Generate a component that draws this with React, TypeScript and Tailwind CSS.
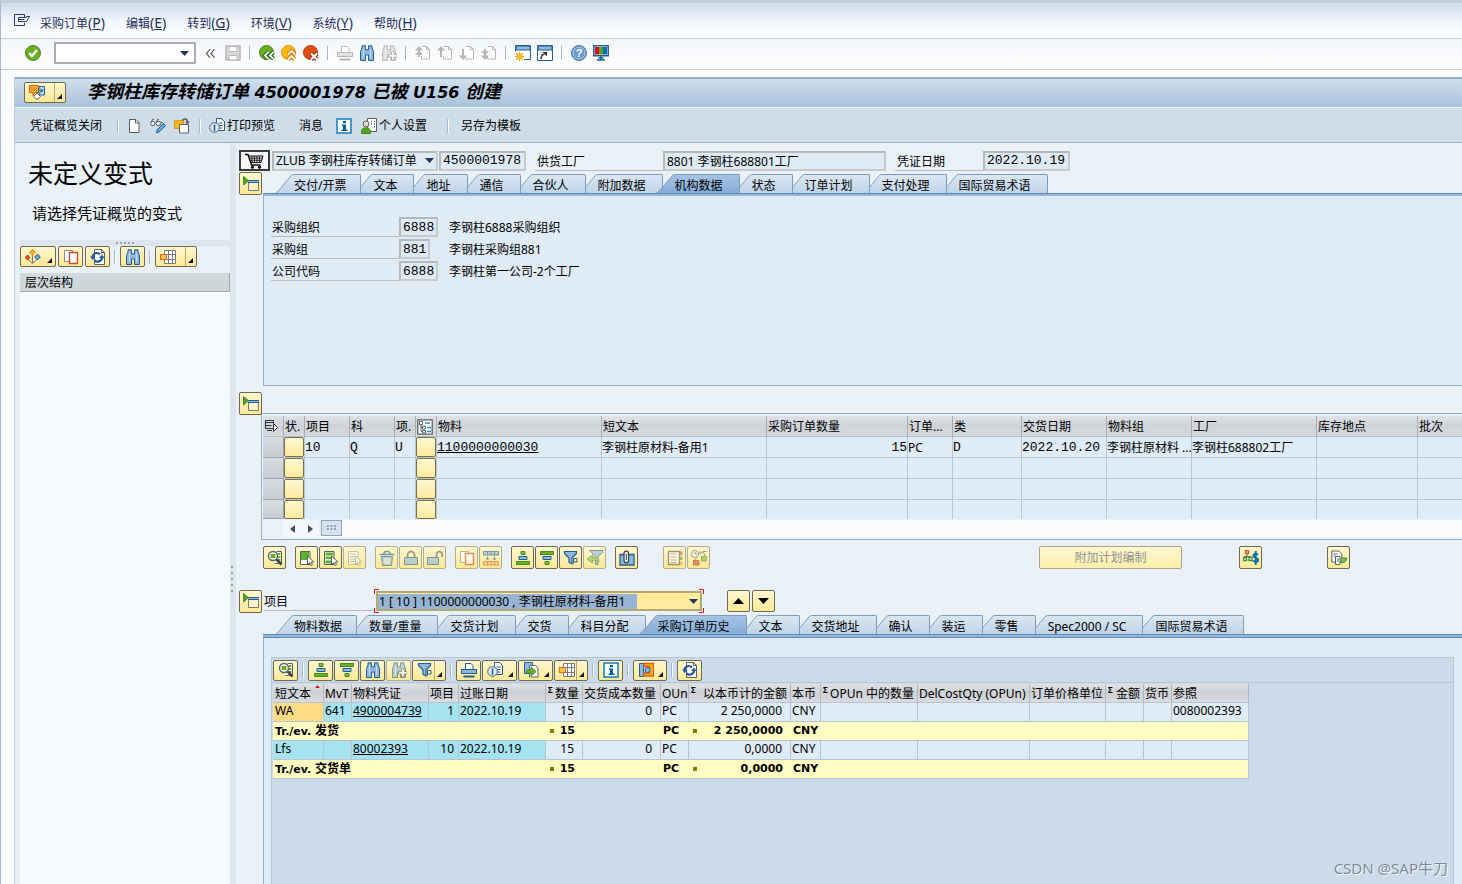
import React from "react";
import clsx from "clsx";

const G = "#3f8f2f";
const B = "#1f5f95";
const LB = "#8fb8dc";
const GR = "#5a5f66";
const MUTE = "#9a9ea2";

const page = (
  <path d="M3.5 1.5h6.5l3 3v10h-9.5z" fill="#fff" stroke={GR} />
);

const binoculars = (s: string, f: string) => (
  <g fill={f} stroke={s}>
    <path d="M1.500 6.500 3 3V.8h3.500v4h3v-4H13V3l1.500 3.500v9H9.500V10h-3v5.500h-5z" />
    <path d="M4.500 3.500v9M11.500 3.500v9" stroke="#fff" strokeOpacity=".5" />
  </g>
);

const printer = (s: string, f: string) => (
  <g stroke={s} fill="#fff">
    <path d="M4.500 7V1.500h5.500l2 2V7" />
    <rect x=".5" y="7.500" width="15" height="4" fill={f} />
    <path d="M2.500 14.500h11" strokeWidth="2" />
  </g>
);

const cursorArrow = (s: string) => (
  <path d="M8.500 6v8.500l2-2 1.500 3 1.500-.8-1.400-2.700h2.800z" fill="#fff" stroke={s} />
);

const docList = (s: string, g: string, mode: number) => (
  <g>
    <path d="M1.500 1.500h9.500v13h-9.500z" fill="#fff" stroke={s} />
    {mode === 0 && <path d="M2 2h8.500v8H2z" fill={g} />}
    {mode === 1 && <path d="M2.500 2.500h8v3h-8zM2.500 6.500h6V9h-6zM2.500 10.500h5.500v3H2.500z" fill={g} />}
    {mode === 2 && <path d="M3 4h6M3 6.500h6M3 9h5M3 11.500h5" stroke={s} />}
    {cursorArrow(s)}
  </g>
);

const arrowPage = (up: boolean, down: boolean) => (
  <g stroke="#b6b6b6" fill="none">
    <path d="M6.500 1.500h5l3 3v9.500h-8v-3M11.500 1.500v3h3" fill="#fff" />
    <path d="M4 4v8" strokeWidth="2" />
    {up && <path d="M0 5.500 4 1l4 4.500z" fill="#b6b6b6" stroke="none" />}
    {down && <path d="M0 10.500 4 15l4-4.500z" fill="#b6b6b6" stroke="none" />}
  </g>
);

const magnify = (
  <g>
    <path d="M9.500 1.500h5v12h-7" fill="#fff" stroke={GR} />
    <path d="M11 3h2.500v2H11zM11 6h2.500v2H11zM11 9h2.500v2H11z" fill="#6ab023" />
    <circle cx="6" cy="6" r="4.500" fill="#fff" stroke={GR} strokeWidth="1.400" />
    <path d="M3.500 4h5v4h-5z" fill="#6ab023" />
    <path d="M9.500 9.500 14.500 14.500" stroke="#444" strokeWidth="2.600" />
  </g>
);

const funnel = (
  <path d="M1.500 1.500h12v2l-4.500 4.500v6l-3-1.500V8L1.500 3.500z" fill={LB} stroke={B} strokeWidth="1.200" />
);

const clockDoc = (
  <g>
    <path d="M7.500.5h5l3 3v9h-8z" fill="#fff" stroke={B} />
    <path d="M9.500 5h4M9.500 7.500h4M9.500 10h4" stroke={B} />
    <circle cx="5.500" cy="9.500" r="4.800" fill="#dcebf7" stroke={GR} />
    <path d="M5.500 6.500v6.500" stroke={B} strokeWidth="1.500" />
  </g>
);

const refresh = (
  <g>
    <path d="M4.500.5h7l3 3v12h-10z" fill="#fff" stroke={GR} />
    <path d="M11.500.5v3h3" fill="none" stroke={GR} />
    <path d="M2.500 8a4.300 4.300 0 0 1 7.500-2.500" fill="none" stroke="#2457a6" strokeWidth="2.200" />
    <path d="M12 8.500a4.300 4.300 0 0 1-7.500 2.700" fill="none" stroke="#2457a6" strokeWidth="2.200" />
    <path d="M0 7.500h5.400L2.700 11zM9 9h5.600L12 5.500z" fill="#2457a6" />
  </g>
);

const grid = (
  <g>
    <path d="M4.500 1.500h11v13h-11zM4.500 5.500h11M4.500 10.500h11M8.500 1.500v13M12.500 1.500v13" fill="#fff" stroke="#77797c" />
    <rect x=".5" y="5.500" width="6" height="5" fill="#ffc74a" stroke="#e0691d" />
  </g>
);

const ICONS: Record<string, React.ReactNode> = {
  menu: (
    <g fill="none" stroke="#2b3768">
      <path d="M10.500 4V1.500h-10v11h10V10" />
      <path d="M4.500 4.500h8V3.500H15.500L12.500 8.500H4.500z" fill="#fff" />
      <path d="M4.500 6.500h6" />
    </g>
  ),
  check: (
    <g>
      <circle cx="8" cy="8" r="7.500" fill="#6ab023" stroke="#4e8330" />
      <path d="M4 8.200 7 11l5-6" fill="none" stroke="#fff" strokeWidth="2.400" />
    </g>
  ),
  save: (
    <g stroke="#b6b6b6" fill="#d9d9d9">
      <path d="M1 1h14v14H1z" strokeWidth="1.500" />
      <path d="M4 1.500h8v5H4zM4 10.500h8v4.500H4z" fill="#fff" />
    </g>
  ),
  back: (
    <g>
      <circle cx="7.500" cy="7.500" r="7" fill="#6ab023" stroke="#3f7f2a" />
      <path d="M9.500 7 6 10.500l3.500 3.500M14.500 7 11 10.500l3.500 3.500" fill="none" stroke="#2f7420" strokeWidth="4" />
      <path d="M9.500 7 6 10.500l3.500 3.500M14.500 7 11 10.500l3.500 3.500" fill="none" stroke="#fff" strokeWidth="1.700" />
    </g>
  ),
  exit: (
    <g>
      <circle cx="7.500" cy="7.500" r="7" fill="#fbb813" stroke="#de8a10" />
      <path d="M7 9.500 10.500 6 14 9.500M7 14.500l3.500-3.500 3.500 3.500" fill="none" stroke="#d9800d" strokeWidth="4" />
      <path d="M7 9.500 10.500 6 14 9.500M7 14.500l3.500-3.500 3.500 3.500" fill="none" stroke="#fff" strokeWidth="1.700" />
    </g>
  ),
  cancel: (
    <g>
      <circle cx="7.500" cy="7.500" r="7" fill="#dd4f12" stroke="#b23b0d" />
      <path d="m8 8.500 6 6M14 8.500l-6 6" stroke="#a33309" strokeWidth="4.500" />
      <path d="m8 8.500 6 6M14 8.500l-6 6" stroke="#fff" strokeWidth="2" />
    </g>
  ),
  printGray: printer("#b6b6b6", "#e2e2e2"),
  print: printer(B, LB),
  find: binoculars(B, LB),
  findNextGray: (
    <g>
      {binoculars("#bdbdbd", "#dedede")}
      <path d="M10.500 6.500v3h-3v2.500h3v3h2.500v-3h3V9.500h-3v-3z" fill="#fff" stroke="#b3b3b3" />
    </g>
  ),
  findNext: (
    <g>
      {binoculars(B, LB)}
      <path d="M10.500 6.500v3h-3v2.500h3v3h2.500v-3h3V9.500h-3v-3z" fill="#fff" stroke={GR} />
    </g>
  ),
  pgFirst: (
    <g>
      {arrowPage(true, false)}
      <path d="M0 10 4 5.500 8 10z" fill="#b6b6b6" />
    </g>
  ),
  pgUp: arrowPage(true, false),
  pgDown: arrowPage(false, true),
  pgLast: (
    <g>
      {arrowPage(false, true)}
      <path d="M0 6 4 10.500 8 6z" fill="#b6b6b6" />
    </g>
  ),
  newWin: (
    <g>
      <path d="M.5.500h15v14H.5z" fill="#fff" stroke={B} />
      <path d="M1 1h14v4H1z" fill={LB} stroke={B} />
      <path d="M0 6.500h9V16H0z" fill="#fff" />
      <path d="M4.500 7v9M0 11.500h9M1.300 8.300l6.400 6.400M7.700 8.300l-6.400 6.400" stroke="#f29a12" strokeWidth="1.300" />
      <circle cx="4.500" cy="11.500" r="2.600" fill="#fbc01e" />
    </g>
  ),
  shortcut: (
    <g>
      <path d="M.5.500h15v15H.5z" fill="#fff" stroke={B} />
      <path d="M1 1h14v4H1z" fill={LB} stroke={B} />
      <path d="M4 14c0-3 1-4.500 3.500-5" fill="none" stroke="#333" strokeWidth="1.500" />
      <path d="M5.500 7H10v4.500z" fill="#333" />
    </g>
  ),
  help: (
    <g>
      <circle cx="8" cy="8" r="7.500" fill="#6b9ccb" stroke="#4577a6" />
      <circle cx="8" cy="8" r="6" fill="none" stroke="#a9c9e6" />
      <text x="8" y="12" textAnchor="middle" fontSize="11" fontWeight="bold" fill="#fff" fontFamily="Liberation Sans, sans-serif">
        ?
      </text>
    </g>
  ),
  monitor: (
    <g>
      <path d="M.8.800h14.400v10H.8z" fill="#fff" stroke={B} strokeWidth="1.500" />
      <path d="M2 2h4v7.500H2z" fill="#e2001a" />
      <path d="M6 2h4v7.500H6z" fill="#5aa21c" />
      <path d="M10 2h4v7.500h-4z" fill="#0a6fb8" />
      <path d="M8 11v3.500M4 15h8M5.500 13h5" stroke={B} strokeWidth="1.500" />
    </g>
  ),
  flow: (
    <g>
      <path d="M.5.5h9v7H6l-2 3v-3H.5z" fill="#ffb52e" stroke="#d65a12" />
      <path d="M2 3h6M2 5h6" stroke="#d65a12" strokeDasharray="1.500 1" />
      <path d="M10 1.500h5.500v8.500H10z" fill="#b9dcf2" stroke={B} />
      <path d="M11.500 3.500v4.500l3-2.200z" fill={B} />
      <path d="M4.500 11.500 8 8l3.500 3.500L8 14.500z" fill="#fff" stroke={GR} />
    </g>
  ),
  page: (
    <g>
      {page}
      <path d="M9.500 1.500v3.500h3.500" fill="none" stroke={GR} />
    </g>
  ),
  glasses: (
    <g>
      <g fill="#e7edf1" stroke={GR}>
        <circle cx="2.800" cy="5.500" r="2.200" />
        <circle cx="8.300" cy="5.500" r="2.200" />
        <path d="M1 4.500 2.500 1.500h1.500M6.500 4l1-2.500H9M10.500 4.500h2" fill="none" />
      </g>
      <path d="m6.500 14.800.8-3.300 6-6 2.200 2.200-6 6z" fill="#5fa6dc" stroke={B} />
    </g>
  ),
  copyDoc: (
    <g>
      <path d="M.5 2.500h9v8h-9z" fill="#fbb41f" stroke="#e79a12" />
      <path d="M5.500 6.500h9v8.500h-9z" fill="#fff" stroke={GR} />
      <path d="M8.500 2.500c1.500-2.500 5-2 5 1.500" fill="none" stroke={GR} strokeWidth="1.500" />
      <path d="M11 3.500h5L13.500 6.500z" fill={GR} />
    </g>
  ),
  clockDoc,
  info: (
    <g>
      <path d="M1 1h14v14H1z" fill="#fff" stroke="#0b7fc2" strokeWidth="1.500" />
      <path d="M7 3h3v2.200H7zM6 6.500h4v5h1.500v1.500h-6v-1.500h1.500V8H6z" fill="#0b5f9d" />
    </g>
  ),
  person: (
    <g>
      <path d="M6.500.5h9v13h-9z" fill="#fff" stroke={GR} />
      <path d="M10 3.500h1M13 3.500h1M10 6h1M13 6h1M13 9h1" stroke={GR} strokeWidth="1.500" />
      <circle cx="5" cy="6" r="3" fill="#e8d3bb" stroke={GR} />
      <path d="M.5 15.500v-3l2-2.500h5l2 2.500v3z" fill="#5aa21c" stroke={G} />
    </g>
  ),
  cart: (
    <g fill="none" stroke="#111">
      <path d="M0 1.500h3l3.500 10.500h9" strokeWidth="1.500" />
      <path d="M4 3h14l-2 6.500H6" />
      <path d="M4.500 5.200h13M5.200 7.300h11.500M7 3v6.500M9.500 3v6.500M12 3v6.500M14.500 3v6.500" strokeWidth=".9" />
      <circle cx="7.500" cy="14.200" r="1.200" fill="#111" />
      <circle cx="14.500" cy="14.200" r="1.200" fill="#111" />
    </g>
  ),
  open: (
    <g>
      <path d="M5.500 4.500h10v10h-10z" fill="#fdf3c4" stroke="#77797c" />
      <path d="M5 4h11v2.500H5z" fill={LB} />
      <path d="M5 4.500h11M5 6.500h11" stroke={B} />
      <path d="M.5.500v8.500L5.500 4.700z" fill="#5aa21c" stroke={G} />
    </g>
  ),
  diamonds: (
    <g>
      <path d="M7.500 4v10M2.500 10l5 4.500 5-4.500" stroke="#777" fill="none" />
      <path d="m7.500.300 3 3-3 3-3-3z" fill="#fbb41f" stroke="#ee8b12" />
      <path d="m2.500 6 2.300 2.500L2.500 11 .2 8.500z" fill="#e0482a" stroke="#a8341b" />
      <path d="m12.500 5 2.800 3-2.800 3-2.800-3z" fill="#69a5d6" stroke={B} />
    </g>
  ),
  copy: (
    <g fill="#fff">
      <path d="M1.500 1.500h8v11h-8z" stroke="#8a8a8a" />
      <path d="M6.500 3.500h8v11h-8z" stroke="#d2452f" strokeWidth="1.300" />
    </g>
  ),
  refresh,
  grid,
  rowsel: (
    <g fill="none" stroke="#333">
      <path d="M1.500 1.500h8v8h-8zM1.500 3.500h8M1.500 6.500h6M3 11.500h5" />
      <path d="M9.500 4.500v8l4-4z" fill="#fff" />
    </g>
  ),
  tree: (
    <g>
      <path d="M.8.800h14.400v14.400H.8z" fill="#fff" stroke={GR} strokeWidth="1.300" />
      <path d="M4 4v8.500h3M4 8.500h3" fill="none" stroke={GR} />
      <path d="M2.500 2.500h3v3h-3zM5.500 7h3v3h-3zM5.500 11.500h3v2.500h-3z" fill="#fff" stroke={GR} />
      <path d="M8 4h5M10 8.500h4M10 12.500h4" stroke="#2d8fce" strokeWidth="1.500" />
    </g>
  ),
  magnify,
  sel0: docList(GR, "#5cb02a", 0),
  sel1: docList(GR, "#5cb02a", 1),
  sel2: docList(MUTE, MUTE, 2),
  trash: (
    <g fill={LB} stroke={B}>
      <path d="M.5 4.500h15M4.500 4l1.500-2.500h4L11.500 4" fill="none" strokeWidth="1.500" />
      <path d="M2.500 6.500h11l-1 9h-9z" />
      <path d="M6 8v6M8 8v6M10 8v6" stroke="#fff" />
    </g>
  ),
  lock: (
    <g>
      <path d="M4.500 8V5a3.500 3.500 0 0 1 7 0v3" fill="none" stroke={GR} strokeWidth="1.800" />
      <path d="M1.500 7.500h13v7h-13z" fill={LB} stroke={B} />
    </g>
  ),
  unlock: (
    <g>
      <path d="M9.500 8V4.500a2.800 2.800 0 0 1 5.600 0V7" fill="none" stroke={GR} strokeWidth="1.800" />
      <path d="M.5 7.500h11v7H.5z" fill={LB} stroke={B} />
    </g>
  ),
  insertRows: (
    <g>
      <path d="M.5 1.500h15v3.500H.5zM4.500 1.500V5M8 1.500V5M11.500 1.500V5" fill={LB} stroke={B} />
      <path d="M4.500 6.500v3M11.500 6.500v3M2.800 8.300l1.700 1.700 1.700-1.700M9.800 8.300l1.700 1.700 1.700-1.700" fill="none" stroke={B} />
      <path d="M.5 11.500h15V15H.5zM4.500 11.500V15M8 11.500V15M11.500 11.500V15" fill="#f6c193" stroke="#d2672f" />
    </g>
  ),
  asc: (
    <g>
      <path d="M6 1.500h4v3H6z" fill="#79bb3c" stroke={G} />
      <path d="M4 6.500h8v3H4z" fill={LB} stroke={B} />
      <path d="M1.500 11.500h13v3h-13z" fill="#6ab023" stroke={G} />
    </g>
  ),
  desc: (
    <g>
      <path d="M1.500 1.500h13v3h-13z" fill="#6ab023" stroke={G} />
      <path d="M4 6.500h8v3H4z" fill={LB} stroke={B} />
      <path d="M6 11.500h4v3H6z" fill="#79bb3c" stroke={G} />
    </g>
  ),
  filter: (
    <g>
      {funnel}
      <path d="M10.500 13.500v-5h3.500v3.500h-3" fill="none" stroke={B} />
    </g>
  ),
  unfilter: (
    <g>
      <path d="M2.500.5h13v2L11 6.500v8H8.500v-8l-4-4z" fill={LB} stroke={B} />
      <path d="M12 12c0-3.500-3-5-6.500-4.500V5L0 9l5.500 4v-2.500c2.500-.3 4.500 0 6.500 1.500z" fill="#7fc04a" stroke={G} />
    </g>
  ),
  attach: (
    <g>
      <path d="M1 4.500h14v10.500H1z" fill={LB} stroke={B} strokeWidth="1.300" />
      <path d="M5 10.500V3.500a2.300 2.300 0 0 1 4.600 0v7a2.300 2.300 0 0 1-4.600 0z" fill="#dbe8f4" stroke="#444" strokeWidth="1.200" />
      <path d="M7.300 4v6" stroke="#444" />
    </g>
  ),
  notebook: (
    <g>
      <path d="M1.500 1.500h11v13h-11z" fill="#fff" stroke="#555" strokeWidth="1.300" />
      <path d="M3.500 4h6M3.500 7h6M3.500 10h6M3.500 12.500h6" stroke="#888" />
      <path d="M13 1.500h2.500v3.500H13z" fill="#d9482f" />
      <path d="M13 6.500h2.500V10H13z" fill="#5aa21c" />
      <path d="M13 11.500h2.500v3H13z" fill="#f08a4b" />
    </g>
  ),
  clocks: (
    <g>
      <circle cx="4" cy="4" r="3.500" fill="#fff" stroke={GR} />
      <path d="M4 2v2h2M9 4V1M9 4l3-2.500h3.500M12 2l3 5M5.500 8 3 11" fill="none" stroke={GR} />
      <path d="M2.500 10.500h5.500v4.500H2.500z" fill="#d9523a" stroke="#a33a1b" />
      <path d="M10.500 6.500h5v4.500h-5z" fill="#7fc04a" stroke={G} />
    </g>
  ),
  cost: (
    <g>
      <path d="M4 4v2.500M1.500 9V6.500h6V9" fill="none" stroke={GR} />
      <path d="M2.500.500h3v3h-3z" fill="#ffd08a" stroke="#e0591d" strokeWidth="1.400" />
      <path d="M.5 7.500h3v3h-3zM6 7.500h3v3H6z" fill="#fff" stroke={G} strokeWidth="1.300" />
      <path d="M15 5c-.6-1.500-4.600-1.500-4.600.8 0 2.400 4.800 1.500 4.800 4.200 0 2.300-4.400 2.300-5.200.3M12.700 1v14" fill="none" stroke="#0a6fa8" strokeWidth="2" />
    </g>
  ),
  docs: (
    <g fill="#fff" stroke={GR}>
      <path d="M.8 1h7l3 3v8h-10z" />
      <path d="M2.500 4h4M2.500 6h2" />
      <path d="M4.500 6.500h4.500v8H4.500zM6 9h2M6 11h2" />
      <path d="M10 8h5.500c0 3-1.500 4.500-3.500 4.500H10z" fill="#7fc04a" stroke={G} />
    </g>
  ),
  exportDoc: (
    <g>
      <path d="M1.500.5h8v11h-8z" fill={LB} stroke={B} />
      <path d="M6.500 3.500h6l2.500 2.500v9H6.500z" fill="#fff" stroke={GR} />
      <path d="M3.500 8h4.500V5l5 4.500L8 14v-3H3.500z" fill="#6ab023" stroke={G} />
    </g>
  ),
  abc: (
    <g>
      <path d="M1.500 1.500h4v13h-4z" fill={LB} stroke={B} />
      <path d="M6 1.500h9.500v12.500H6v-3h5.500v-6.500H6z" fill="#fbb41f" stroke="#e0591d" strokeWidth="1.300" />
      <circle cx="9.500" cy="8" r="2.600" fill={LB} stroke={B} />
    </g>
  ),
};

function Icon({ name, className }: { name: string; className?: string }) {
  return (
    <svg viewBox="0 0 16 16" className={clsx("size-4 shrink-0", className)} aria-hidden="true">
      {ICONS[name]}
    </svg>
  );
}

function YellowButton({
  icon,
  label,
  disabled,
  menu,
  split,
  className,
  size = "sq",
}: {
  icon: string;
  label: string;
  disabled?: boolean;
  menu?: boolean;
  split?: boolean;
  className?: string;
  size?: "sq" | "flat";
}) {
  return (
    <button
      type="button"
      aria-label={label}
      disabled={disabled}
      className={clsx(
        "relative flex shrink-0 items-center rounded-[2px] border bg-linear-to-b from-[#fff7cf] to-[#fde995]",
        size === "sq" ? "h-[23px]" : "h-[21px]",
        menu ? "justify-start pl-1" : size === "sq" ? "w-[23px] justify-center" : "w-[25px] justify-center",
        menu && !className && "w-[34px]",
        disabled ? "border-[#b5ad85]" : "border-[#6f6a4c]",
        className,
      )}
    >
      <Icon name={icon} className={clsx(disabled && "opacity-60")} />
      {split && <span className="absolute inset-y-0 right-[10px] w-px bg-[#b9a96b]" />}
      {menu && (
        <svg viewBox="0 0 5 5" className="absolute right-[3px] bottom-[3px] size-[5px]" aria-hidden="true">
          <path d="M5 0v5H0z" fill="#111" />
        </svg>
      )}
    </button>
  );
}

function PlainIcon({ icon, label, disabled }: { icon: string; label: string; disabled?: boolean }) {
  return (
    <button type="button" aria-label={label} disabled={disabled} className="shrink-0">
      <Icon name={icon} />
    </button>
  );
}

function Sep({ className }: { className?: string }) {
  return <span className={clsx("h-[14px] w-[2px] shrink-0 border-l border-[#9db9d4] bg-white", className)} />;
}

const MENUS = [
  ["采购订单", "P"],
  ["编辑", "E"],
  ["转到", "G"],
  ["环境", "V"],
  ["系统", "Y"],
  ["帮助", "H"],
];

function DownArrow({ className }: { className?: string }) {
  return (
    <svg viewBox="0 0 9 5" className={clsx("pointer-events-none h-[5px] w-[9px]", className)} aria-hidden="true">
      <path d="M0 0h9L4.500 5z" fill="#22356b" />
    </svg>
  );
}

function MenuBar() {
  return (
    <nav className="flex h-9 items-center border-b border-[#c5ccd6] bg-linear-to-b from-[#cfdceb] via-[#f4f8fc] via-60% to-white pt-[6px] pl-[13px]">
      <Icon name="menu" className="mr-[10px] mb-[6px]" />
      <div className="flex gap-[21px]">
        {MENUS.map(([t, k]) => (
          <button key={k} type="button" className="text-[#1f2f5c]">
            {t}
            <span className="text-sm leading-4">
              (<u>{k}</u>)
            </span>
          </button>
        ))}
      </div>
    </nav>
  );
}

function StandardToolbar() {
  return (
    <div className="flex h-[31px] items-center gap-[6px] border-b border-[#c5ccd6] bg-linear-to-b from-[#f3f6fa] to-white pb-[2px] pl-[24px]">
      <PlainIcon icon="check" label="回车" />
      <div className="relative ml-[7px] flex h-[22px] w-[142px] items-center">
        <input
          aria-label="命令字段"
          className="h-full w-full rounded-[1px] border-2 border-[#a9adb2] bg-white px-1 text-xs outline-none"
        />
        <DownArrow className="absolute right-[7px]" />
      </div>
      <button type="button" aria-label="折叠" className="mx-[3px] shrink-0">
        <svg viewBox="0 0 11 10" className="h-[9px] w-[11px]" aria-hidden="true">
          <path d="M5 .5 1 5l4 4.500M10 .5 6 5l4 4.500" fill="none" stroke="#444" strokeWidth="1.200" />
        </svg>
      </button>
      <PlainIcon icon="save" label="保存" disabled />
      <Sep className="mx-[2px]" />
      <PlainIcon icon="back" label="返回" />
      <PlainIcon icon="exit" label="退出" />
      <PlainIcon icon="cancel" label="取消" />
      <Sep className="mx-[2px]" />
      <PlainIcon icon="printGray" label="打印" disabled />
      <PlainIcon icon="find" label="查找" />
      <PlainIcon icon="findNextGray" label="查找下一个" disabled />
      <Sep className="mx-[2px]" />
      <PlainIcon icon="pgFirst" label="第一页" disabled />
      <PlainIcon icon="pgUp" label="上一页" disabled />
      <PlainIcon icon="pgDown" label="下一页" disabled />
      <PlainIcon icon="pgLast" label="最后一页" disabled />
      <Sep className="mx-[2px]" />
      <PlainIcon icon="newWin" label="新建会话" />
      <PlainIcon icon="shortcut" label="快捷方式" />
      <Sep className="mx-[2px]" />
      <PlainIcon icon="help" label="帮助" />
      <PlainIcon icon="monitor" label="定制本地布局" />
    </div>
  );
}

function TitleBar() {
  return (
    <header className="flex h-[31px] items-center border-t-2 border-b border-t-[#94adc7] border-b-[#e8f0f6] bg-linear-to-b from-[#cfdfec] to-[#a9c1da] pb-px pl-[9px]">
      <YellowButton icon="flow" label="服务" menu split size="flat" className="w-[42px]" />
      <h1 className="ml-[21px] font-['DejaVu_Sans','Noto_Sans_CJK_SC',sans-serif] text-base leading-5 font-bold whitespace-pre text-black italic">
        <span className="text-lg leading-5">李钢柱库存转储订单</span> 4500001978 <span className="text-lg leading-5">已被</span> U156{" "}
        <span className="text-lg leading-5">创建</span>
      </h1>
    </header>
  );
}

function AppToolbar() {
  return (
    <div className="flex h-[35px] items-center border-b border-[#9db4ca] bg-[#cfdde8] pt-[2px] pl-[15px]">
      <button type="button">凭证概览关闭</button>
      <Sep className="mr-[7px] ml-[15px]" />
      <div className="flex gap-[8px]">
        <PlainIcon icon="page" label="创建" />
        <PlainIcon icon="glasses" label="显示/更改" />
        <PlainIcon icon="copyDoc" label="其他凭证" />
      </div>
      <Sep className="mr-[8px] ml-[9px]" />
      <button type="button" className="flex items-center gap-[2px]">
        <Icon name="clockDoc" />
        打印预览
      </button>
      <button type="button" className="ml-[24px]">
        消息
      </button>
      <div className="mr-[9px] ml-[13px] flex">
        <PlainIcon icon="info" label="帮助信息" />
      </div>
      <button type="button" className="flex items-center gap-[2px]">
        <Icon name="person" />
        个人设置
      </button>
      <Sep className="mr-[12px] ml-[20px]" />
      <button type="button">另存为模板</button>
    </div>
  );
}

function Grip({ vertical }: { vertical?: boolean }) {
  return (
    <span className={clsx("flex gap-[2px]", vertical && "flex-col")}>
      {[0, 1, 2, 3, 4].map((i) => (
        <span key={i} className={clsx("size-[2px] bg-[#8f9fb0]", vertical && "mb-[2px]")} />
      ))}
    </span>
  );
}

function Overview() {
  return (
    <aside className="flex w-[215px] shrink-0 flex-col bg-[#e9f0f6] pl-[5px]">
      <h2 className="mt-[13px] ml-[8px] text-[25px] leading-[34px]">未定义变式</h2>
      <p className="mt-[13px] ml-[12px] text-[15px] leading-[20px]">请选择凭证概览的变式</p>
      <div className="mt-[17px] flex h-[6px] items-center justify-center bg-[#dce6ec]">
        <Grip />
      </div>
      <div className="flex h-[21px] items-center gap-[2px]">
        <YellowButton icon="diamonds" label="选择变式" menu size="flat" className="w-[36px]" />
        <YellowButton icon="copy" label="复制" size="flat" />
        <YellowButton icon="refresh" label="刷新" size="flat" />
        <Sep className="mx-[2px]" />
        <YellowButton icon="find" label="查找" size="flat" />
        <Sep className="mx-[2px]" />
        <YellowButton icon="grid" label="布局" menu split size="flat" className="w-[42px]" />
      </div>
      <div className="mt-[6px] h-[19px] border-r border-b border-[#a0a8b0] bg-linear-to-b from-[#d2d9dc] to-[#cdd4d8] pl-[5px] leading-[19px]">
        层次结构
      </div>
      <div className="grow bg-[#f7fbff]" />
    </aside>
  );
}

function Tabs({ items, active, label }: { items: string[]; active: number; label: string }) {
  return (
    <div role="tablist" aria-label={label} className="flex h-[19px] pl-[13px]">
      {items.map((t, i) => {
        const on = i === active;
        return (
          <button
            key={t}
            type="button"
            role="tab"
            aria-selected={on}
            className={clsx("relative flex shrink-0 pl-[18px]", i > 0 && "ml-[-6px]")}
            style={{ zIndex: on ? 30 : 20 - i }}
          >
            <svg viewBox="0 0 18 19" className="absolute top-0 left-0 h-[19px] w-[18px]" aria-hidden="true">
              <defs>
                <linearGradient id={`edge-${label}-${i}`} x1="0" y1="0" x2="0" y2="1">
                  <stop offset="0" stopColor={on ? "#a6c3e3" : "#dae7f2"} />
                  <stop offset="1" stopColor={on ? "#85add8" : "#bfd4e8"} />
                </linearGradient>
              </defs>
              <path d="M0 19C3 17 13 4 15 2c1-1.300 2-1.500 3-1.500V19z" fill={`url(#edge-${label}-${i})`} />
              <path d="M0 19C3 17 13 4 15 2c1-1.300 2-1.500 3-1.500" fill="none" stroke="#7b9cbd" />
            </svg>
            <span
              className={clsx(
                "block h-[19px] rounded-tr-[2px] border-t border-r border-[#7b9cbd] bg-linear-to-b leading-[21px] whitespace-nowrap",
                i === 0 ? "pr-[14px]" : "pr-[16px]",
                on ? "from-[#a6c3e3] to-[#85add8]" : "from-[#dae7f2] to-[#bfd4e8]",
              )}
            >
              {t}
            </span>
          </button>
        );
      })}
    </div>
  );
}

function TabLine() {
  return <div className="h-[4px] border-y border-[#5f8ab5] bg-[#94b9de]" />;
}

const field =
  "border-2 border-[#b4b9bd] border-r-[#c6cacd] border-b-[#c6cacd] bg-[#dfebf4] outline-none h-[20px] leading-4 px-[2px]";
const mono = "font-['Liberation_Mono','Noto_Sans_CJK_SC',monospace] text-[13px]";

function HeaderRow() {
  return (
    <div className="mt-[7px] flex h-[21px] items-center pl-[3px]">
      <span className="flex h-[21px] w-[31px] items-center justify-center border-2 border-[#3a3a3a] bg-[#f4f6f8]">
        <svg viewBox="0 0 19 16" className="h-4 w-[19px]" aria-hidden="true">
          {ICONS.cart}
        </svg>
      </span>
      <div className="relative ml-[2px] flex items-center">
        <select aria-label="凭证类型" className={clsx(field, "w-[166px] appearance-none text-xs")}>
          <option>ZLUB 李钢柱库存转储订单</option>
        </select>
        <DownArrow className="absolute right-[4px]" />
      </div>
      <input aria-label="凭证号" readOnly value="4500001978" className={clsx(field, mono, "ml-px w-[87px]")} />
      <label htmlFor="plant" className="ml-[9px] h-[20px] w-[128px] border-b border-[#b9bdc1] pl-[2px] leading-[22px]">
        供货工厂
      </label>
      <input id="plant" readOnly value="8801 李钢柱688801工厂" className={clsx(field, "w-[223px]")} />
      <label htmlFor="docdate" className="ml-[9px] h-[20px] w-[88px] border-b border-[#b9bdc1] pl-[2px] leading-[22px]">
        凭证日期
      </label>
      <input id="docdate" readOnly value="2022.10.19" className={clsx(field, mono, "w-[87px]")} />
    </div>
  );
}

const ORG = [
  { id: "ekorg", label: "采购组织", code: "6888", name: "李钢柱6888采购组织", wide: true },
  { id: "ekgrp", label: "采购组", code: "881", name: "李钢柱采购组881", wide: false },
  { id: "bukrs", label: "公司代码", code: "6888", name: "李钢柱第一公司-2个工厂", wide: true },
];

const ITEM_COLS: { t: string; w?: string }[] = [
  { t: "", w: "w-[21px]" },
  { t: "状.", w: "w-[21px]" },
  { t: "项目", w: "w-[45px]" },
  { t: "科", w: "w-[45px]" },
  { t: "项.", w: "w-[21px]" },
  { t: "", w: "w-[21px]" },
  { t: "物料", w: "w-[165px]" },
  { t: "短文本", w: "w-[165px]" },
  { t: "采购订单数量", w: "w-[141px]" },
  { t: "订单...", w: "w-[45px]" },
  { t: "类", w: "w-[69px]" },
  { t: "交货日期", w: "w-[85px]" },
  { t: "物料组", w: "w-[85px]" },
  { t: "工厂", w: "w-[125px]" },
  { t: "库存地点", w: "w-[101px]" },
  { t: "批次" },
];

const ITEM_ROW = ["", "", "10", "Q", "U", "", "1100000000030", "李钢柱原材料-备用1", "15", "PC", "D", "2022.10.20", "李钢柱原材料 ...", "李钢柱688802工厂", "", ""];
const MONO_COLS = [2, 3, 4, 6, 8, 10, 11];

function ItemTable() {
  return (
    <div className="ml-[25px] border-y border-l border-[#8fb0ce] pt-[2px] pb-[2px] pl-px">
      <table className="w-full table-fixed border-separate border-spacing-0">
        <colgroup>
          {ITEM_COLS.map((c, i) => (
            <col key={i} className={c.w} />
          ))}
        </colgroup>
        <thead>
          <tr>
            {ITEM_COLS.map((c, i) => (
              <th
                key={i}
                scope="col"
                className="h-[21px] overflow-hidden border-r border-b border-r-[#a3adb8] border-b-[#b4bcc6] bg-linear-to-b from-[#dfe3e7] via-[#cfd3d8] to-[#d7dbe0] p-0 pt-[2px] pl-px text-left font-normal whitespace-nowrap last:border-r-0"
              >
                {i === 0 ? <Icon name="rowsel" /> : i === 5 ? <Icon name="tree" /> : c.t}
              </th>
            ))}
          </tr>
        </thead>
        <tbody>
          {[0, 1, 2, 3].map((r) => (
            <tr key={r}>
              {ITEM_COLS.map((_, i) => {
                if (i === 0)
                  return (
                    <td key={i} className="border-r border-b border-[#9aa4af] bg-linear-to-b from-[#d9dde2] to-[#c8ccd2] p-0" />
                  );
                const v = r === 0 ? ITEM_ROW[i] : "";
                const isButton = i === 1 || i === 5;
                return (
                  <td
                    key={i}
                    className={clsx(
                      "border-r border-[#bac6d5] bg-[#dfebf5] p-0 whitespace-nowrap last:border-r-0",
                      r < 3 ? "h-[21px] border-b" : "h-[19px]",
                      !isButton && "pt-[2px]",
                      MONO_COLS.includes(i) && mono,
                      i === 8 && "text-right",
                    )}
                  >
                    {isButton ? (
                      <button
                        type="button"
                        aria-label={i === 1 ? "状态" : "明细"}
                        className={clsx(
                          "block w-full rounded-[2px] border border-[#77704a] bg-linear-to-b from-[#fff8d2] to-[#fdea9c]",
                          r < 3 ? "h-[20px]" : "h-[19px]",
                        )}
                      />
                    ) : i === 6 && v ? (
                      <a href="#material" className="underline">
                        {v}
                      </a>
                    ) : (
                      v
                    )}
                  </td>
                );
              })}
            </tr>
          ))}
        </tbody>
      </table>
      <div className="mt-px flex h-[17px] pl-[20px]">
        <button type="button" aria-label="向左滚动" className="flex w-[18px] items-center justify-center bg-[#f3f7fa]">
          <svg viewBox="0 0 5 8" className="h-2 w-[5px]" aria-hidden="true">
            <path d="M5 0v8L0 4z" fill="#3f4e60" />
          </svg>
        </button>
        <button type="button" aria-label="向右滚动" className="flex w-[18px] items-center justify-center bg-[#f3f7fa]">
          <svg viewBox="0 0 5 8" className="h-2 w-[5px]" aria-hidden="true">
            <path d="M0 0v8l5-4z" fill="#3f4e60" />
          </svg>
        </button>
        <div className="ml-[2px] flex grow bg-[#fbfbfb]">
          <span className="flex h-[16px] w-[21px] items-center justify-center border border-[#8fa3b8] bg-[#d5e2ee]">
            <svg viewBox="0 0 9 6" className="h-[6px] w-[9px]" aria-hidden="true">
              <path d="M0 1h9M0 4h9" stroke="#8fa3b8" strokeWidth="2" strokeDasharray="2 1.500" />
            </svg>
          </span>
        </div>
      </div>
    </div>
  );
}

function ItemToolbar() {
  return (
    <div className="mt-[6px] flex h-[23px] items-center pl-[27px]">
      <YellowButton icon="magnify" label="项目明细" />
      <div className="ml-[9px] flex gap-px">
        <YellowButton icon="sel0" label="选择全部" />
        <YellowButton icon="sel1" label="选择块" />
        <YellowButton icon="sel2" label="取消选择" disabled />
      </div>
      <div className="ml-[9px] flex gap-px">
        <YellowButton icon="trash" label="删除" disabled />
        <YellowButton icon="lock" label="冻结" disabled />
        <YellowButton icon="unlock" label="解冻" disabled />
      </div>
      <div className="ml-[9px] flex gap-px">
        <YellowButton icon="copy" label="复制" disabled />
        <YellowButton icon="insertRows" label="重复" disabled />
      </div>
      <div className="ml-[9px] flex gap-px">
        <YellowButton icon="asc" label="升序" />
        <YellowButton icon="desc" label="降序" />
        <YellowButton icon="filter" label="过滤" />
        <YellowButton icon="unfilter" label="删除过滤" disabled />
      </div>
      <YellowButton icon="attach" label="附件" className="ml-[9px]" />
      <div className="ml-[25px] flex gap-px">
        <YellowButton icon="notebook" label="缺省值" disabled />
        <YellowButton icon="clocks" label="分配" disabled />
      </div>
      <button
        type="button"
        disabled
        className="ml-[329px] h-[23px] w-[143px] shrink-0 rounded-[2px] border border-[#aca585] bg-linear-to-b from-[#fff7cf] to-[#fdeeab] text-[#8d9291]"
      >
        附加计划编制
      </button>
      <YellowButton icon="cost" label="条件" className="ml-[57px]" />
      <YellowButton icon="docs" label="凭证" className="ml-[65px]" />
    </div>
  );
}

function StepButton({ up }: { up?: boolean }) {
  return (
    <button
      type="button"
      aria-label={up ? "上一项目" : "下一项目"}
      className="flex h-[22px] w-[23px] items-center justify-center rounded-[2px] border border-[#6f6a4c] bg-linear-to-b from-[#fff7cf] to-[#fde995]"
    >
      <svg viewBox="0 0 11 6" className="h-[6px] w-[11px]" aria-hidden="true">
        <path d={up ? "M5.500 0 11 6H0z" : "M0 0h11L5.500 6z"} fill="#000" />
      </svg>
    </button>
  );
}

function ItemSelector() {
  return (
    <div className="mt-[20px] flex h-[24px] items-center pl-[3px]">
      <YellowButton icon="open" label="折叠项目明细" />
      <label htmlFor="item" className="ml-[2px] h-[20px] w-[110px] border-b border-[#b9bdc1] leading-[22px]">
        项目
      </label>
      <div className="relative flex h-[24px] w-[330px] items-center p-[2px]">
        <svg viewBox="0 0 330 24" className="pointer-events-none absolute inset-0 h-full w-full" aria-hidden="true">
          <path d="M5 .5H.5V5M325 .5h4.500V5M5 23.500H.5V19M325 23.500h4.500V19" fill="none" stroke="#e2131b" />
        </svg>
        <div className="flex h-[20px] w-full items-center border-2 border-[#b3a975] bg-[#feec9c]">
          <select id="item" className="h-[15px] w-[259px] appearance-none bg-[#98b4d3] pl-px leading-[15px] outline-none">
            <option>1 [ 10 ] 1100000000030 , 李钢柱原材料-备用1</option>
          </select>
        </div>
        <DownArrow className="absolute right-[6px]" />
      </div>
      <div className="ml-[23px] flex gap-[2px]">
        <StepButton up />
        <StepButton />
      </div>
    </div>
  );
}

const HIST_COLS = [
  { t: "短文本", w: "w-[51px]" },
  { t: "MvT", w: "w-[28px]" },
  { t: "物料凭证", w: "w-[77px]" },
  { t: "项目", w: "w-[30px]" },
  { t: "过账日期", w: "w-[87px]" },
  { t: "数量", w: "w-[37px]", sum: true },
  { t: "交货成本数量", w: "w-[78px]" },
  { t: "OUn", w: "w-[28px]" },
  { t: "以本币计的金额", w: "w-[102px]", sum: true },
  { t: "本币", w: "w-[30px]" },
  { t: "OPUn 中的数量", w: "w-[97px]", sum: true },
  { t: "DelCostQty (OPUn)", w: "w-[112px]" },
  { t: "订单价格单位", w: "w-[76px]" },
  { t: "金额", w: "w-[38px]", sum: true },
  { t: "货币", w: "w-[28px]" },
  { t: "参照", w: "w-[77px]" },
];

const HIST = [
  { cells: ["WA", "641", "4900004739", "1", "2022.10.19", "15", "0", "PC", "2 250,0000", "CNY", "", "", "", "", "", "0080002393"] },
  { total: "发货", amount: "2 250,0000" },
  { cells: ["Lfs", "", "80002393", "10", "2022.10.19", "15", "0", "PC", "0,0000", "CNY", "", "", "", "", "", ""] },
  { total: "交货单", amount: "0,0000" },
];

const NUMERIC = [5, 6, 8];

function Marker() {
  return <span className="size-1 bg-[#857a00]" />;
}

function HistoryTable() {
  return (
    <table className="w-[976px] table-fixed border-separate border-spacing-0">
      <colgroup>
        {HIST_COLS.map((c) => (
          <col key={c.t} className={c.w} />
        ))}
      </colgroup>
      <thead>
        <tr>
          {HIST_COLS.map((c, i) => (
            <th
              key={c.t}
              scope="col"
              className={clsx(
                "relative h-[19px] border-r border-b border-r-[#b0b7c0] border-b-[#b8c4d2] bg-linear-to-b from-[#dfe2e5] via-[#cdd1d5] to-[#d8dce1] p-0 pt-[2px] font-normal whitespace-nowrap",
                c.sum ? "pr-[3px] text-right" : "text-left",
                i === 0 ? "pl-[2px]" : "pl-px",
              )}
            >
              {c.sum && <span className="absolute top-[1px] left-[2px] text-[8px] leading-[10px] font-bold">Σ</span>}
              {i === 0 && (
                <svg viewBox="0 0 6 4" className="absolute top-[1px] right-[3px] h-[3px] w-[5px]" aria-hidden="true">
                  <path d="M3 0l3 4H0z" fill="#c4122b" />
                </svg>
              )}
              {c.t}
            </th>
          ))}
        </tr>
      </thead>
      <tbody>
        {HIST.map((row, r) =>
          row.cells ? (
            <tr key={r}>
              {row.cells.map((v, i) => (
                <td
                  key={i}
                  className={clsx(
                    "h-[19px] border-r border-b border-[#b8c4d2] p-0 pb-[2px] leading-[16px] whitespace-nowrap",
                    i < 5 ? (r === 0 && i === 0 ? "bg-[#fddc86]" : "bg-[#a6e3f1]") : "bg-[#dfebf5]",
                    i === 3 && "pr-[4px] text-right",
                    NUMERIC.includes(i) && "pr-[8px] text-right",
                    i === 0 ? "pl-[2px]" : i !== 3 && !NUMERIC.includes(i) && "pl-px",
                  )}
                >
                  {i === 2 ? (
                    <a href="#document" className="underline">
                      {v}
                    </a>
                  ) : (
                    v
                  )}
                </td>
              ))}
            </tr>
          ) : (
            <tr
              key={r}
              className="font-['DejaVu_Sans','Noto_Sans_CJK_SC',sans-serif] text-[11px] font-bold *:h-[19px] *:border-b *:border-[#b8c4d2] *:bg-[#fffdc1] *:p-0 *:leading-[14px]"
            >
              <td colSpan={5}>
                <span className="pl-[2px]">
                  Tr./ev. <span className="text-xs leading-[14px]">{row.total}</span>
                </span>
              </td>
              <td>
                <span className="flex items-center justify-between pr-[8px] pl-[4px]">
                  <Marker />
                  15
                </span>
              </td>
              <td />
              <td>
                <span className="pl-[2px]">PC</span>
              </td>
              <td>
                <span className="flex items-center justify-between pr-[8px] pl-[4px]">
                  <Marker />
                  {row.amount}
                </span>
              </td>
              <td colSpan={7} className="border-r">
                <span className="pl-[2px]">CNY</span>
              </td>
            </tr>
          ),
        )}
      </tbody>
    </table>
  );
}

function HistoryToolbar() {
  return (
    <div className="flex h-[25px] items-center gap-px border-b border-[#b8c6d6] pl-px">
      <YellowButton icon="magnify" label="明细" size="flat" />
      <Sep className="mx-[3px]" />
      <YellowButton icon="asc" label="升序" size="flat" />
      <YellowButton icon="desc" label="降序" size="flat" />
      <YellowButton icon="find" label="查找" size="flat" />
      <YellowButton icon="findNext" label="查找下一个" size="flat" disabled />
      <YellowButton icon="filter" label="过滤" menu split size="flat" />
      <Sep className="mx-[3px]" />
      <YellowButton icon="print" label="打印" size="flat" />
      <YellowButton icon="clockDoc" label="视图" menu size="flat" className="w-[35px]" />
      <YellowButton icon="exportDoc" label="导出" menu size="flat" className="w-[35px]" />
      <YellowButton icon="grid" label="布局" menu split size="flat" />
      <Sep className="mx-[3px]" />
      <YellowButton icon="info" label="信息" size="flat" />
      <Sep className="mx-[3px]" />
      <YellowButton icon="abc" label="ABC 分析" menu size="flat" />
      <Sep className="mx-[3px]" />
      <YellowButton icon="refresh" label="刷新" size="flat" />
    </div>
  );
}

export default function App() {
  return (
    <div className="relative flex min-h-screen flex-col overflow-x-hidden border-t-[3px] border-l border-t-[#c3cedb] border-l-[#aab6c6] bg-[#fbfcfe] font-['Noto_Sans','Noto_Sans_CJK_SC',sans-serif] text-xs leading-4 text-black">
      <MenuBar />
      <StandardToolbar />
      <div className="mt-[7px] ml-[13px] flex grow flex-col border-l border-[#b9cbdc]">
        <TitleBar />
        <AppToolbar />
        <div className="flex grow">
          <Overview />
          <div className="relative w-[6px] shrink-0 bg-[#dce6ec]">
            <span className="absolute top-[423px] left-[1px]">
              <Grip vertical />
            </span>
          </div>
          <main className="flex min-w-0 grow flex-col overflow-hidden bg-[#e9f0f6]">
            <HeaderRow />
            <div className="mt-[1px] flex h-[24px]">
              <div className="ml-[3px] w-[24px] shrink-0">
                <YellowButton icon="open" label="折叠表头" />
              </div>
              <div className="min-w-0 grow pt-[2px]">
                <Tabs
                  label="head"
                  active={6}
                  items={["交付/开票", "文本", "地址", "通信", "合伙人", "附加数据", "机构数据", "状态", "订单计划", "支付处理", "国际贸易术语"]}
                />
                <TabLine />
              </div>
            </div>
            <section className="ml-[27px] h-[190px] border-b border-l border-[#8fb0ce] bg-[#dfebf5] pt-[21px] pl-[7px]">
              <div className="flex flex-col gap-[2px]">
                {ORG.map((o) => (
                  <div key={o.id} className="flex h-[20px] items-center">
                    <label htmlFor={o.id} className="h-[20px] w-[128px] border-b border-[#b9bdc1] pl-px leading-[22px]">
                      {o.label}
                    </label>
                    <input id={o.id} readOnly value={o.code} className={clsx(field, mono, o.wide ? "w-[39px]" : "w-[31px]")} />
                    <span className={clsx("pt-[2px]", o.wide ? "ml-[11px]" : "ml-[19px]")}>{o.name}</span>
                  </div>
                ))}
              </div>
            </section>
            <div className="mt-[6px] ml-[3px]">
              <YellowButton icon="open" label="折叠项目概览" />
            </div>
            <div className="mt-[-2px]">
              <ItemTable />
            </div>
            <ItemToolbar />
            <ItemSelector />
            <div className="mt-[2px] pl-[27px]">
              <Tabs
                label="item"
                active={5}
                items={["物料数据", "数量/重量", "交货计划", "交货", "科目分配", "采购订单历史", "文本", "交货地址", "确认", "装运", "零售", "Spec2000 / SC", "国际贸易术语"]}
              />
              <TabLine />
            </div>
            <section className="ml-[27px] flex grow flex-col border-l border-[#8fb0ce] bg-[#dfebf5] pt-[19px] pr-[8px] pl-[7px]">
              <div className="flex grow flex-col border-x border-t border-[#b8c6d6] bg-[#ccdbe9]">
                <HistoryToolbar />
                <div className="pt-px pl-px">
                  <HistoryTable />
                </div>
              </div>
            </section>
          </main>
        </div>
      </div>
      <span className="absolute right-[14px] bottom-[6px] text-[15px] leading-5 text-[#7f8b99] [text-shadow:1px_1px_0_#f4f7fa]">
        CSDN @SAP牛刀
      </span>
    </div>
  );
}
